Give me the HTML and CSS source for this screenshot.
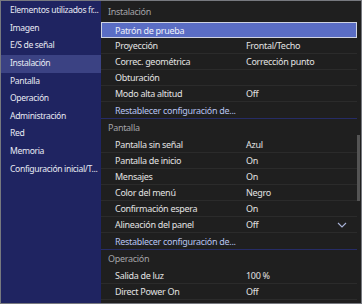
FILE: index.html
```html
<!DOCTYPE html>
<html lang="es">
<head>
  <meta charset="UTF-8" />
  <title>Menú de configuración</title>
  <link rel="stylesheet" href="styles.css">
</head>
<body>
  <div class="frame">
    <div class="sidebar">
      <div class="nav-item">Elementos utilizados fr...</div>
      <div class="nav-item">Imagen</div>
      <div class="nav-item">E/S de señal</div>
      <div class="nav-item active">Instalación</div>
      <div class="nav-item">Pantalla</div>
      <div class="nav-item">Operación</div>
      <div class="nav-item">Administración</div>
      <div class="nav-item">Red</div>
      <div class="nav-item">Memoria</div>
      <div class="nav-item">Configuración inicial/T...</div>
    </div>

    <div class="panel">
      <div class="list">
        <div class="section-title first">Instalación</div>
        <div class="row selected"><span class="label">Patrón de prueba</span><span class="value"></span></div>
        <div class="row"><span class="label">Proyección</span><span class="value">Frontal/Techo</span></div>
        <div class="row"><span class="label">Correc. geométrica</span><span class="value">Corrección punto</span></div>
        <div class="row"><span class="label">Obturación</span><span class="value"></span></div>
        <div class="row"><span class="label">Modo alta altitud</span><span class="value">Off</span></div>
        <div class="row link last"><span class="label">Restablecer configuración de...</span></div>

        <div class="section-title">Pantalla</div>
        <div class="row"><span class="label">Pantalla sin señal</span><span class="value">Azul</span></div>
        <div class="row"><span class="label">Pantalla de inicio</span><span class="value">On</span></div>
        <div class="row"><span class="label">Mensajes</span><span class="value">On</span></div>
        <div class="row"><span class="label">Color del menú</span><span class="value">Negro</span></div>
        <div class="row"><span class="label">Confirmación espera</span><span class="value">On</span></div>
        <div class="row"><span class="label">Alineación del panel</span><span class="value">Off</span>
          <svg class="chevron" width="10" height="6" viewBox="0 0 10 6"><path d="M1 1 L5 5 L9 1" fill="none" stroke="#a9b3d8" stroke-width="1.1"/></svg>
        </div>
        <div class="row link last"><span class="label">Restablecer configuración de...</span></div>

        <div class="section-title">Operación</div>
        <div class="row"><span class="label">Salida de luz</span><span class="value">100 %</span></div>
        <div class="row"><span class="label">Direct Power On</span><span class="value">Off</span></div>
      </div>
      <div class="scrollbar"><div class="thumb"></div></div>
    </div>
  </div>
</body>
</html>
```

FILE: styles.css
```css
* { box-sizing: border-box; margin: 0; padding: 0; }
body {
  font-family: "Noto Sans", "Open Sans", sans-serif;
  font-size: 9px;
  letter-spacing: -0.3px;
  background: #1e1e1e;
}
.frame {
  width: 362px; height: 304px;
  border: 1px solid #77797f;
  display: flex; overflow: hidden;
  background: #1f1f1f;
}
.sidebar {
  width: 100px; flex: none;
  background: #1f2461;
  padding-top: 1.2px;
}
.nav-item {
  height: 17.6px; line-height: 17.6px;
  padding-left: 9px;
  font-size: 8.6px;
  letter-spacing: -0.35px;
  color: #e8eaf3;
  white-space: nowrap;
}
.nav-item.active { background: #3b4283; }

.panel { flex: 1; display: flex; min-width: 0; }
.list { flex: 1; min-width: 0; }
.section-title {
  height: 19px; line-height: 18px;
  padding-left: 7px;
  color: #a4a4a8;
  border-top: 1px solid #262c66;
}
.section-title.first { border-top: none; height: 21px; line-height: 22px; }
.row {
  height: 16px;
  display: grid; grid-template-columns: 145px 1fr auto;
  align-items: center;
  border-bottom: 1px solid #2b2b2b;
  color: #e2e2e2;
}
.row .label { padding-left: 14px; white-space: nowrap; }
.row.last { border-bottom: none; }
.row.link .label { color: #b7c3f0; }
.row.selected {
  background: #5a6dc4;
  border: 1px solid #cfd3e2;
  color: #eef0fb;
}
.row.selected .label { padding-left: 13px; }
.chevron { margin-right: 10px; }
.scrollbar { width: 4px; flex: none; padding-top: 134px; }
.thumb { width: 3px; height: 66px; background: #545454; }
```
